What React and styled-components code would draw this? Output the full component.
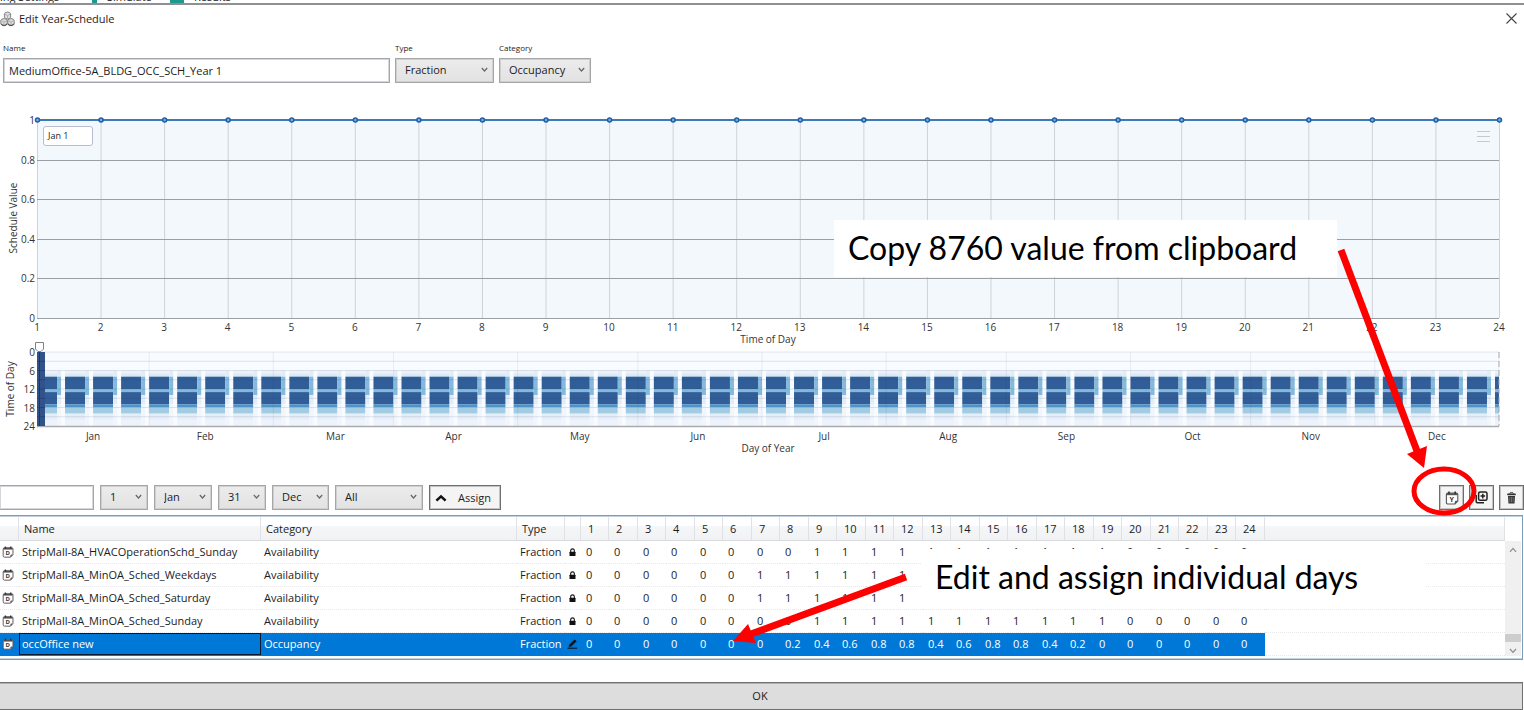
import React, { useLayoutEffect, useRef, useState } from "react";
import styled, { createGlobalStyle, css } from "styled-components";

const GlobalStyle = createGlobalStyle`
  * { box-sizing: border-box; }
  body {
    margin: 0;
    background: #fff;
    color: #1c1c1c;
    font-family: "Open Sans", "Noto Sans", sans-serif;
    font-size: 11px;
    line-height: 16px;
  }
  button, input, select { font: inherit; color: inherit; margin: 0; }
`;

const Page = styled.div`
  position: relative;
  display: flex;
  flex-direction: column;
  min-width: 1300px;
  overflow: hidden;
`;

/* ---------- window chrome ---------- */

const BackdropTabs = styled.div`
  display: flex;
  align-items: flex-end;
  height: 3px;
  overflow: hidden;
  line-height: 14px;
`;
const BackdropTab = styled.span`
  flex: none;
  width: ${(p) => p.$width}px;
  height: 14px;
  margin-bottom: -1px;
  white-space: nowrap;
  overflow: hidden;
`;
const BackdropMark = styled.span`
  flex: none;
  width: ${(p) => p.$width}px;
  height: 3px;
  margin-right: 10px;
  background: #1d9a8f;
`;

const TitleBar = styled.header`
  display: flex;
  align-items: center;
  gap: 4px;
  height: 29px;
  border-top: 2px solid #8f8f94;
`;
const Title = styled.h1`
  flex: 1;
  margin: 0;
  font-size: 11px;
  font-weight: 400;
`;
const CloseButton = styled.button`
  display: grid;
  place-items: center;
  width: 25px;
  height: 24px;
  padding: 0;
  border: 0;
  background: none;
`;

/* ---------- form ---------- */

const Form = styled.div`
  display: flex;
  gap: 5px;
  padding: 8px 3px 0;
`;
const Field = styled.label`
  display: flex;
  flex-direction: column;
  gap: 3px;
  width: ${(p) => p.$width}px;
  font-size: 8px;
  line-height: 15px;
`;
const TextBox = styled.input`
  width: ${(p) => (p.$width ? p.$width + "px" : "100%")};
  height: 25px;
  padding: 0 5px;
  border: 1px solid #a5a6ac;
  outline: 0;
  background: #fff;
  font-size: 11px;
  box-shadow: inset 0 0 0 1px #d5d6da;
  ${(p) => p.$flushLeft && css`border-left: 0;`}
`;
const SelectBox = styled.span`
  position: relative;
  display: block;
  width: ${(p) => (p.$width ? p.$width + "px" : "100%")};
  height: 25px;
  svg {
    position: absolute;
    right: 6px;
    top: 9px;
    pointer-events: none;
  }
`;
const NativeSelect = styled.select`
  appearance: none;
  width: 100%;
  height: 100%;
  padding: 0 12px 2px 9px;
  border: 1px solid #a6a6a6;
  border-radius: 0;
  outline: 0;
  background: linear-gradient(#ececec, #e2e2e2);
  box-shadow: inset 0 0 0 1px #cfcfcf;
  font-size: 11px;
`;

function Select({ label, value, width }) {
  return (
    <SelectBox $width={width}>
      <NativeSelect aria-label={label} defaultValue={value}>
        <option>{value}</option>
      </NativeSelect>
      <svg width="7" height="6" viewBox="0 0 7 6">
        <path d="M0.8 1 L3.5 4 L6.2 1" fill="none" stroke="#666" strokeWidth="1.2" />
      </svg>
    </SelectBox>
  );
}

/* ---------- charts ---------- */

const MARGIN_LEFT = 37;
const MARGIN_RIGHT = 25;

const ChartArea = styled.section`
  position: relative;
  margin-top: ${(p) => p.$gap || 0}px;
  > svg { display: block; }
`;
const AxisText = styled.text`
  font-size: 10px;
  fill: #333;
  text-anchor: ${(p) => p.$anchor || "middle"};
`;
const DayTag = styled.div`
  position: absolute;
  left: 43px;
  top: 14px;
  width: 50px;
  height: 20px;
  padding-left: 4px;
  border: 1px solid #b9bccf;
  border-radius: 3px;
  background: #fff;
  font-size: 9px;
  line-height: 18px;
`;
const MenuButton = styled.button`
  position: absolute;
  right: 34px;
  top: 19px;
  display: flex;
  flex-direction: column;
  gap: 4px;
  padding: 0;
  border: 0;
  background: none;
`;
const MenuLine = styled.span`
  width: 13px;
  height: 1px;
  background: #c6c9d4;
`;

function useWidth() {
  const ref = useRef(null);
  const [width, setWidth] = useState(1524);
  useLayoutEffect(() => {
    const node = ref.current;
    const update = () => setWidth(node.clientWidth);
    update();
    const observer = new ResizeObserver(update);
    observer.observe(node);
    return () => observer.disconnect();
  }, []);
  return [ref, width];
}

function DayChart() {
  const [ref, width] = useWidth();
  const plot = width - MARGIN_LEFT - MARGIN_RIGHT;
  const top = 8;
  const height = 198;
  const hours = Array.from({ length: 24 }, (_, i) => i);
  const x = (i) => MARGIN_LEFT + (plot * i) / 23;
  const y = (v) => top + height * (1 - v);
  return (
    <ChartArea ref={ref} $gap={29}>
      <svg width={width} height="236">
        <rect x={MARGIN_LEFT} y={top} width={plot} height={height} fill="#f3f8fd" />
        {hours.map((i) => (
          <line key={i} x1={x(i) + 0.5} x2={x(i) + 0.5} y1={top} y2={top + height} stroke="#cdd3d9" />
        ))}
        {[0, 0.2, 0.4, 0.6, 0.8].map((v) => (
          <line key={v} x1={MARGIN_LEFT} x2={MARGIN_LEFT + plot} y1={Math.round(y(v)) + 0.5} y2={Math.round(y(v)) + 0.5} stroke="#9a9fa4" />
        ))}
        <line x1={x(0)} x2={x(23)} y1={y(1)} y2={y(1)} stroke="#3d7ab8" strokeWidth="2" />
        {hours.map((i) => (
          <circle key={i} cx={x(i) + 0.5} cy={y(1)} r="2" fill="#7fb0da" stroke="#1c5fa8" strokeWidth="1.5" />
        ))}
        {[0, 0.2, 0.4, 0.6, 0.8, 1].map((v) => (
          <AxisText key={v} x="35" y={y(v) + 4} $anchor="end">{v}</AxisText>
        ))}
        {hours.map((i) => (
          <AxisText key={i} x={x(i)} y="219">{i + 1}</AxisText>
        ))}
        <AxisText x={MARGIN_LEFT + plot / 2} y="231">Time of Day</AxisText>
        <AxisText transform="translate(17 106) rotate(-90)">Schedule Value</AxisText>
      </svg>
      <DayTag>Jan 1</DayTag>
      <MenuButton aria-label="Chart menu">
        <MenuLine />
        <MenuLine />
        <MenuLine />
      </MenuButton>
    </ChartArea>
  );
}

/* start hour, end hour, colour */
const WEEKDAY = [
  [6, 7, "#eaf1f9"], [7, 8, "#dce8f4"], [8, 12, "#315e98"], [12, 13, "#81b9da"],
  [13, 17, "#315e98"], [17, 18, "#4d92c8"], [18, 20, "#a2cce2"], [20, 22, "#e5eef8"], [22, 24, "#edf3fb"],
];
const SATURDAY = [[6, 8, "#e2ecf7"], [8, 14, "#84bbdc"], [14, 17, "#e2edf7"], [17, 24, "#f0f6fc"]];

const MONTHS = [
  ["Jan", 14, 28], ["Feb", 42, 59], ["Mar", 74.5, 89], ["Apr", 104, 120],
  ["May", 135.5, 150], ["Jun", 165, 181], ["Jul", 196.5, 212], ["Aug", 227.5, 242],
  ["Sep", 257, 273], ["Oct", 288.5, 303], ["Nov", 318, 334], ["Dec", 349.5, 365],
];

function YearChart() {
  const [ref, width] = useWidth();
  const plot = width - MARGIN_LEFT - MARGIN_RIGHT;
  const top = 4;
  const height = 74;
  const x = (day) => MARGIN_LEFT + (plot * day) / 365;
  const y = (hour) => top + (height * hour) / 24;
  const blocks = [];
  for (let day = 0; day < 365; day += 7) {
    WEEKDAY.forEach(([from, to, fill]) => blocks.push({ from, to, fill, a: day, b: Math.min(day + 5, 365) }));
    if (day + 6 < 365) SATURDAY.forEach(([from, to, fill]) => blocks.push({ from, to, fill, a: day + 5, b: day + 6 }));
  }
  return (
    <ChartArea ref={ref}>
      <svg width={width} height="108" overflow="visible">
        <rect x={MARGIN_LEFT} y={top} width={plot} height={height} fill="#f8fbff" />
        {blocks.map((b, i) => (
          <rect key={i} x={x(b.a)} y={y(b.from)} width={x(b.b) - x(b.a)} height={y(b.to) - y(b.from)} fill={b.fill} />
        ))}
        {[0, 3, 6, 9, 12, 15, 18, 21].map((h) => (
          <line key={h} x1={MARGIN_LEFT} x2={MARGIN_LEFT + plot} y1={y(h)} y2={y(h)} stroke="#203050" strokeOpacity="0.12" />
        ))}
        {MONTHS.map(([name, , end]) => (
          <line key={name} x1={x(end)} x2={x(end)} y1={top} y2={top + height} stroke="#203050" strokeOpacity="0.07" />
        ))}
        <path d={`M${MARGIN_LEFT} ${top + height + 0.5} H${MARGIN_LEFT + plot}`} stroke="#a9abb0" strokeWidth="1.5" />
        <path d={`M${MARGIN_LEFT + plot} ${top} V${top + height}`} stroke="#a9abb0" strokeDasharray="6 3" />
        <rect x={MARGIN_LEFT} y={top} width="8" height={height} fill="#32538a" />
        <path d={`M${MARGIN_LEFT + 2.5} ${top} V${top + height}`} stroke="#1c376a" />
        {[3, 6, 9, 12, 15, 18, 21].map((h) => (
          <line key={h} x1={MARGIN_LEFT} x2={MARGIN_LEFT + 8} y1={y(h)} y2={y(h)} stroke="#1c376a" strokeOpacity="0.6" />
        ))}
        <path d="M35.5 -5.5 H43.5 V1 L41 3.5 H38 L35.5 1 Z" fill="#fff" stroke="#808080" />
        {[0, 6, 12, 18, 24].map((h) => (
          <AxisText key={h} x="35" y={y(h) + 4} $anchor="end">{h}</AxisText>
        ))}
        {MONTHS.map(([name, mid]) => (
          <AxisText key={name} x={x(mid)} y="92">{name}</AxisText>
        ))}
        <AxisText x={MARGIN_LEFT + plot / 2} y="104">Day of Year</AxisText>
        <AxisText transform="translate(14 41) rotate(-90)">Time of Day</AxisText>
      </svg>
    </ChartArea>
  );
}

/* ---------- toolbar ---------- */

const Toolbar = styled.div`
  display: flex;
  align-items: center;
  gap: 6px;
  margin-top: 29px;
`;
const ToolGroup = styled.div`
  display: flex;
  gap: 5px;
  margin-left: auto;
`;
const ToolButton = styled.button`
  display: flex;
  align-items: center;
  justify-content: center;
  gap: ${(p) => (p.$wide ? 11 : 0)}px;
  width: ${(p) => (p.$wide ? 72 : 25)}px;
  height: 25px;
  padding: 0 ${(p) => (p.$wide ? 4 : 0)}px 0 0;
  border: 1px solid #6e6e6e;
  background: #f4f4f4;
  box-shadow: inset 0 0 0 1px #c4c4c4;
`;

/* ---------- schedule table ---------- */

const GridFrame = styled.div`
  display: flex;
  height: 145px;
  margin: 5px 1px 0 0;
  border: solid #7c9cbc;
  border-width: 1px 1px 1px 0;
  box-shadow: inset 0 1px 0 #c3d2e2, inset 0 -1px 0 #c3d2e2;
  padding-top: 1px;
`;
const Grid = styled.table`
  flex: 1;
  min-width: 0;
  height: 139px;
  table-layout: fixed;
  border-collapse: separate;
  border-spacing: 0;
`;
const Head = styled.th`
  height: 24px;
  padding: 0 0 0 ${(p) => p.$pad || 7}px;
  border-right: 1px solid #dfe1e5;
  border-bottom: 1px solid #d9dbde;
  background: linear-gradient(#ffffff 0 40%, #f5f6f8 41%, #f1f2f4 100%);
  text-align: left;
  font-weight: 400;
  white-space: nowrap;
`;
const Cell = styled.td`
  height: 23px;
  padding: 0 0 0 ${(p) => p.$pad || 5}px;
  border-bottom: 1px dotted #e8e8ea;
  white-space: nowrap;
  svg { display: block; }
`;
const Row = styled.tr`
  ${(p) => p.$selected && css`
    ${Cell}:not(:last-child) {
      background: #0078d7;
      border-bottom-color: #0078d7;
      color: #fff;
    }
    ${Cell}:nth-child(2) { box-shadow: inset 0 0 0 1px #0b1a2a; }
  `}
`;
const ScrollTrack = styled.div`
  display: flex;
  flex-direction: column;
  justify-content: space-between;
  align-items: center;
  width: 16px;
  margin: 24px 1px 3px 0;
  padding: 6px 0 2px;
  background: #f0f0f0;
`;
const ScrollThumb = styled.span`
  width: 16px;
  height: 8px;
  margin: auto 0 6px;
  background: #cdcdcd;
`;

const HOURS = Array.from({ length: 24 }, (_, i) => i);
const run = (zeros, ones, total = 24) =>
  Array.from({ length: total }, (_, i) => (i >= zeros && i < zeros + ones ? 1 : 0));
const ROWS = [
  { name: "StripMall-8A_HVACOperationSchd_Sunday", category: "Availability", values: run(8, 11) },
  { name: "StripMall-8A_MinOA_Sched_Weekdays", category: "Availability", values: run(6, 6, 12) },
  { name: "StripMall-8A_MinOA_Sched_Saturday", category: "Availability", values: run(6, 6, 12) },
  { name: "StripMall-8A_MinOA_Sched_Sunday", category: "Availability", values: run(8, 11) },
  {
    name: "occOffice new", category: "Occupancy", selected: true,
    values: [0, 0, 0, 0, 0, 0, 0, 0.2, 0.4, 0.6, 0.8, 0.8, 0.4, 0.6, 0.8, 0.8, 0.4, 0.2, 0, 0, 0, 0, 0, 0],
  },
];

/* ---------- icons ---------- */

const IconLetter = styled.text`
  font-size: ${(p) => p.$size}px;
  font-weight: 700;
  text-anchor: middle;
  fill: #333;
`;

function CalendarIcon({ letter, size }) {
  return (
    <svg width={size} height={size} viewBox="0 0 14 14">
      <path d="M2.8 2 H11.2 Q12.8 2 12.8 3.6 V10 L10 13 H3 Q1.4 13 1.4 11.4 V3.6 Q1.4 2 2.8 2 Z" fill="#fff" stroke="#555" strokeWidth="1.1" />
      <path d="M1.8 2.2 H12.4 V4.2 H1.8 Z" fill="#555" />
      <path d="M4 0.6 V3 M10.2 0.6 V3" stroke="#333" strokeWidth="1.6" />
      <path d="M12.8 9.8 L9.8 13 V11.2 Q9.8 9.8 11.2 9.8 Z" fill="#555" />
      <IconLetter x="6.8" y="10.8" $size={7}>{letter}</IconLetter>
    </svg>
  );
}

function SpheresIcon() {
  return (
    <svg width="15" height="16" viewBox="0 0 15 16">
      <g stroke="#777" fill="#dedede" strokeWidth="0.9">
        <path d="M7.5 1 Q10.4 1.2 10.6 3 V6.2 Q9.6 8 7.5 8.2 Q5.4 8 4.4 6.2 V3 Q4.6 1.2 7.5 1 Z" />
        <path d="M4 7.6 Q7 7.8 7.2 9.4 V12.6 Q6.2 14.4 4 14.6 Q1.8 14.4 0.8 12.6 V9.4 Q1 7.8 4 7.6 Z" />
        <path d="M11 7.6 Q14 7.8 14.2 9.4 V12.6 Q13.2 14.4 11 14.6 Q8.8 14.4 7.8 12.6 V9.4 Q8 7.8 11 7.6 Z" />
      </g>
      <path d="M4.8 3.2 L7.5 4.6 L10.2 3.2 M7.5 4.6 V8 M1.2 9.6 L4 11 L6.8 9.6 M4 11 V14.4 M8.2 9.6 L11 11 L13.8 9.6 M11 11 V14.4" fill="none" stroke="#a4a4a4" strokeWidth="0.8" />
      <path d="M1 12.8 Q2 14.4 4 14.6 Q6.2 14.4 7.2 12.8 M7.8 12.8 Q8.8 14.4 11 14.6 Q13.2 14.4 14.2 12.8" fill="none" stroke="#555" strokeWidth="1.1" />
    </svg>
  );
}

function LockIcon() {
  return (
    <svg width="7" height="9" viewBox="0 0 7 9">
      <path d="M1.7 4 V2.6 Q1.7 0.9 3.5 0.9 Q5.3 0.9 5.3 2.6 V4" fill="none" stroke="#111" strokeWidth="1.1" />
      <rect x="0.5" y="3.7" width="6" height="4.3" rx="0.6" fill="#111" />
    </svg>
  );
}

function PencilIcon() {
  return (
    <svg width="11" height="10" viewBox="0 0 11 10">
      <path d="M1.6 8 L2.2 5.8 L7.6 0.6 L9.6 2.2 L4.2 7.4 Z" fill="#0b1520" />
      <path d="M0.5 9.2 H10" stroke="#0b1520" strokeWidth="1.1" />
    </svg>
  );
}

function CopyPlusIcon() {
  return (
    <svg width="13" height="13" viewBox="0 0 13 13">
      <rect x="3.6" y="0.9" width="8.4" height="8.4" rx="1.6" fill="none" stroke="#222" strokeWidth="1.5" />
      <path d="M7.8 2.8 V7.4 M5.5 5.1 H10.1" stroke="#222" strokeWidth="1.5" />
      <path d="M1.2 4 V10.6 Q1.2 11.8 2.4 11.8 H9" fill="none" stroke="#222" strokeWidth="1.5" />
    </svg>
  );
}

function TrashIcon() {
  return (
    <svg width="11" height="12" viewBox="0 0 11 12">
      <path d="M3.6 1.6 Q3.6 0.6 5.5 0.6 Q7.4 0.6 7.4 1.6" fill="none" stroke="#333" strokeWidth="1" />
      <rect x="1.2" y="1.5" width="8.6" height="1.8" rx="0.6" fill="#333" />
      <path d="M2 4 H9 L8.5 11.4 H2.5 Z" fill="#333" />
      <path d="M3.9 5 V10.4 M5.5 5 V10.4 M7.1 5 V10.4" stroke="#999" strokeWidth="0.6" />
    </svg>
  );
}

function ScrollArrow({ down }) {
  return (
    <svg width="8" height="6" viewBox="0 0 8 6">
      <path d={down ? "M1 1 L4 4.4 L7 1" : "M1 4.8 L4 1.4 L7 4.8"} fill="none" stroke="#8c8c8c" strokeWidth="1.2" />
    </svg>
  );
}

/* ---------- footer and annotations ---------- */

const OkButton = styled.button`
  height: 28px;
  margin: 22px 1px 0 0;
  padding: 0 2px 0 0;
  border: 1px solid #707070;
  border-left: 0;
  background: #ddd;
  box-shadow: inset 0 1px 0 #b0b0b0;
`;
const Callout = styled.div`
  position: absolute;
  right: ${(p) => p.$right}px;
  top: ${(p) => p.$top}px;
  width: ${(p) => p.$width}px;
  height: 57px;
  padding-left: 14px;
  background: #fff;
  color: #000;
  font-family: "Lato", "Open Sans", sans-serif;
  font-size: 32px;
  line-height: 55px;
  white-space: nowrap;
`;
const Marks = styled.svg`
  position: absolute;
  right: 0;
  top: 0;
  pointer-events: none;
`;

export default function App() {
  return (
    <Page>
      <GlobalStyle />
      <BackdropTabs aria-hidden="true">
        <BackdropTab $width={92}>ing Settings</BackdropTab>
        <BackdropMark $width={5} />
        <BackdropTab $width={63}>Simulate</BackdropTab>
        <BackdropMark $width={14} />
        <BackdropTab $width={60}>Results</BackdropTab>
      </BackdropTabs>

      <TitleBar>
        <SpheresIcon />
        <Title>Edit Year-Schedule</Title>
        <CloseButton aria-label="Close">
          <svg width="11" height="11" viewBox="0 0 11 11">
            <path d="M0.5 0.5 L10.5 10.5 M10.5 0.5 L0.5 10.5" stroke="#444" strokeWidth="1.1" />
          </svg>
        </CloseButton>
      </TitleBar>

      <Form>
        <Field $width={387}>
          Name
          <TextBox defaultValue="MediumOffice-5A_BLDG_OCC_SCH_Year 1" />
        </Field>
        <Field $width={99}>
          Type
          <Select label="Type" value="Fraction" />
        </Field>
        <Field $width={92}>
          Category
          <Select label="Category" value="Occupancy" />
        </Field>
      </Form>

      <DayChart />
      <YearChart />

      <Toolbar>
        <TextBox aria-label="Filter schedules" $width={94} $flushLeft />
        <Select label="From day" value="1" width={48} />
        <Select label="From month" value="Jan" width={58} />
        <Select label="To day" value="31" width={48} />
        <Select label="To month" value="Dec" width={57} />
        <Select label="Weekdays" value="All" width={88} />
        <ToolButton $wide>
          <svg width="12" height="8" viewBox="0 0 12 8">
            <path d="M1.4 6.6 L6 2.4 L10.6 6.6" fill="none" stroke="#111" strokeWidth="2.6" />
          </svg>
          Assign
        </ToolButton>
        <ToolGroup>
          <ToolButton aria-label="Paste year values">
            <CalendarIcon letter="Y" size={14} />
          </ToolButton>
          <ToolButton aria-label="Duplicate">
            <CopyPlusIcon />
          </ToolButton>
          <ToolButton aria-label="Delete">
            <TrashIcon />
          </ToolButton>
        </ToolGroup>
      </Toolbar>

      <GridFrame>
        <Grid>
          <colgroup>
            <col width="19" />
            <col width="242" />
            <col width="256" />
            <col width="48" />
            <col width="16" />
            {HOURS.map((i) => (
              <col key={i} width={i % 2 ? 29 : 28} />
            ))}
            <col />
          </colgroup>
          <thead>
            <tr>
              <Head />
              <Head $pad={5}>Name</Head>
              <Head $pad={5}>Category</Head>
              <Head $pad={5}>Type</Head>
              <Head />
              {HOURS.map((i) => (
                <Head key={i}>{i + 1}</Head>
              ))}
              <Head />
            </tr>
          </thead>
          <tbody>
            {ROWS.map((row) => (
              <Row key={row.name} $selected={row.selected}>
                <Cell $pad={2}>
                  <CalendarIcon letter="D" size={12} />
                </Cell>
                <Cell $pad={3}>{row.name}</Cell>
                <Cell $pad={3}>{row.category}</Cell>
                <Cell $pad={3}>Fraction</Cell>
                <Cell $pad={row.selected ? 2 : 4}>{row.selected ? <PencilIcon /> : <LockIcon />}</Cell>
                {HOURS.map((i) => (
                  <Cell key={i}>{row.values[i]}</Cell>
                ))}
                <Cell />
              </Row>
            ))}
          </tbody>
        </Grid>
        <ScrollTrack>
          <ScrollArrow />
          <ScrollThumb />
          <ScrollArrow down />
        </ScrollTrack>
      </GridFrame>

      <OkButton>OK</OkButton>

      <Callout $right={187} $top={220} $width={503}>Copy 8760 value from clipboard</Callout>
      <Callout $right={99} $top={549} $width={504}>Edit and assign individual days</Callout>
      <Marks width="824" height="710" viewBox="700 0 824 710">
        <path d="M1341 250 L1417 451" stroke="#f00" strokeWidth="7" />
        <path d="M1407 454 L1427 446 L1424 468 Z" fill="#f00" />
        <path d="M906 577 L751 634" stroke="#f00" strokeWidth="7" />
        <path d="M748 624 L756 643 L733 641 Z" fill="#f00" />
        <ellipse cx="1444" cy="491" rx="30" ry="22" fill="none" stroke="#f00" strokeWidth="5" />
      </Marks>
    </Page>
  );
}
